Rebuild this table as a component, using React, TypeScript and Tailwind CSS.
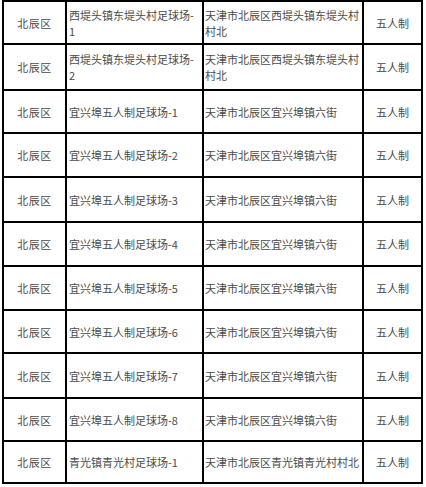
import React from "react";

type Row = { h: string; name: string[]; addr: string[] };

const rows: Row[] = [
  { h: "h-[43px]", name: ["西堤头镇东堤头村足球场-", "1"], addr: ["天津市北辰区西堤头镇东堤头村", "村北"] },
  { h: "h-[46px]", name: ["西堤头镇东堤头村足球场-", "2"], addr: ["天津市北辰区西堤头镇东堤头村", "村北"] },
  { h: "h-[43px]", name: ["宜兴埠五人制足球场-1"], addr: ["天津市北辰区宜兴埠镇六街"] },
  { h: "h-[44px]", name: ["宜兴埠五人制足球场-2"], addr: ["天津市北辰区宜兴埠镇六街"] },
  { h: "h-[45px]", name: ["宜兴埠五人制足球场-3"], addr: ["天津市北辰区宜兴埠镇六街"] },
  { h: "h-[44px]", name: ["宜兴埠五人制足球场-4"], addr: ["天津市北辰区宜兴埠镇六街"] },
  { h: "h-[44px]", name: ["宜兴埠五人制足球场-5"], addr: ["天津市北辰区宜兴埠镇六街"] },
  { h: "h-[43px]", name: ["宜兴埠五人制足球场-6"], addr: ["天津市北辰区宜兴埠镇六街"] },
  { h: "h-[45px]", name: ["宜兴埠五人制足球场-7"], addr: ["天津市北辰区宜兴埠镇六街"] },
  { h: "h-[43px]", name: ["宜兴埠五人制足球场-8"], addr: ["天津市北辰区宜兴埠镇六街"] },
  { h: "h-[42px]", name: ["青光镇青光村足球场-1"], addr: ["天津市北辰区青光镇青光村村北"] },
];

const cell = "border-r-2 border-b-2 border-black flex items-center";

export default function App() {
  return (
    <div className="w-[426px] h-[487px] bg-white overflow-hidden">
      <div
        className="ml-[2px] w-[421px] border-l-2 border-t-2 border-black text-[11px] leading-[16px] text-[#4a4a4a]"
        style={{ fontFamily: '"Noto Sans CJK SC", "Noto Sans", sans-serif' }}
      >
        {rows.map((r, i) => (
          <div key={i} className={`flex ${r.h}`}>
            <div className={`${cell} w-[63px] justify-center tracking-[0.5px]`}>北辰区</div>
            <div className={`${cell} w-[137px] pl-[2px]`}>
              <div>
                {r.name.map((l, j) => (
                  <div key={j} className="whitespace-nowrap">{l}</div>
                ))}
              </div>
            </div>
            <div className={`${cell} w-[160px] pl-[1px]`}>
              <div>
                {r.addr.map((l, j) => (
                  <div key={j} className="whitespace-nowrap">{l}</div>
                ))}
              </div>
            </div>
            <div className={`${cell} w-[59px] justify-center`}>五人制</div>
          </div>
        ))}
      </div>
    </div>
  );
}
